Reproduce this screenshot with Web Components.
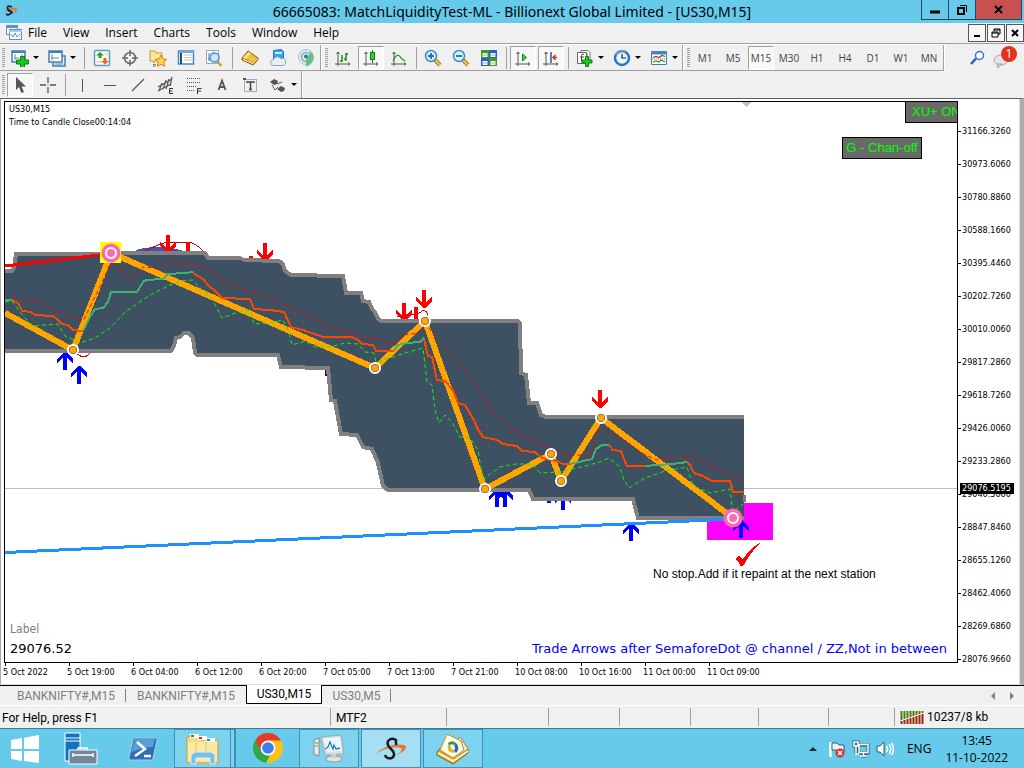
<!DOCTYPE html>
<html lang="en">
<head>
<meta charset="utf-8">
<title>66665083: MatchLiquidityTest-ML</title>
<style>
html, body { margin: 0; height: 100%; }
body { font-family: "Open Sans", "Noto Sans", sans-serif; color: #000; background: #f0f0f0; overflow: hidden; }
</style>
</head>
<body>
<trading-desktop></trading-desktop>
<script>
const ICONS = {
  brand: '<path d="M1 10Q7 4 14 5q4 3-4 6 4-3 2-4-5-1-11 3z" fill="#e8762c"/><path d="M10 4Q5 2 5.500 5T9 8.500 6 12l-2-1" fill="none" stroke="#223" stroke-width="1.800"/>',
  mdi: '<rect x="1.500" y="1.500" width="11" height="9" fill="#fff" stroke="#5b8fd6"/><path d="M1 3h12" stroke="#5b8fd6" stroke-width="2"/><rect x="4.500" y="5.500" width="12" height="10" fill="#fff" stroke="#5b8fd6"/><path d="M4 7h13" stroke="#a9c8ee" stroke-width="2"/><path d="M6 10l2 3 2-4 2 4 3-3" fill="none" stroke="#5b8fd6"/>',
  newchart: '<rect x="1" y="2" width="13" height="11" fill="#fff" stroke="#3f7fb5" stroke-width="1.500"/><path d="M1 3h13" stroke="#3f7fb5" stroke-width="2"/><path d="M4 5v6M3 9h5M11 5v4" stroke="#5a8db8" fill="none"/><path d="M9.500 7.500h4v3.500h4v4h-4v3.500h-4V15h-4v-4h4z" fill="#1ec41e" stroke="#0b7d12"/>',
  profiles: '<rect x="5" y="7" width="12" height="10" fill="#e3f0fb" stroke="#3f7fb5" stroke-width="1.500"/><rect x="1" y="2" width="13" height="11" fill="#fff" stroke="#3f7fb5" stroke-width="1.500"/><path d="M1 3h13" stroke="#3f7fb5" stroke-width="2"/><path d="M4 5v6M3 9h8M7 15h8" stroke="#5a8db8"/>',
  market: '<rect x="1.500" y="1.500" width="15" height="15" rx="1" fill="#fffdf0" stroke="#5a9bd0" stroke-width="1.500"/><path d="M4 13h4M12 5h3" stroke="#bbb"/><path d="M7 3l4 3.500H8.500V9h-3V6.500H3z" fill="#20a52c"/><path d="M12 15.500L8 12h2.500V9h3v3H16z" fill="#f0642b"/>',
  target: '<g fill="none" stroke="#666" stroke-width="1.500"><circle cx="9" cy="9" r="5.500"/><path d="M9 1v6M9 11v6M1 9h6M11 9h6"/></g>',
  navigator: '<path d="M1 2h5l1 2h6v8H1z" fill="#fbe79a" stroke="#c79a2a"/><path d="M5 13v5M4 16h5" stroke="#333" stroke-dasharray="1 1"/><path d="M12 6l1.800 3.800 4 .5-3 2.800.8 4.200L12 15.300 8.400 17.300l.8-4.200-3-2.800 4-.5z" fill="#ffd44d" stroke="#c8871a"/>',
  datawin: '<rect x="1.500" y="2" width="15" height="13" fill="#fff" stroke="#4a86c0" stroke-width="1.500"/><path d="M4 3v12" stroke="#1d4f86" stroke-width="2"/><path d="M2 3h15" stroke="#6fa8dc" stroke-width="2"/><path d="M7 6h8M7 8.500h8M7 11h8" stroke="#c2c2c2"/>',
  tester: '<path d="M1.500 1.500h12v13h-12z" fill="#fffdf5" stroke="#9aa8b4"/><path d="M4 4v8M3 10h4M8 3v4" stroke="#4a86c0"/><circle cx="9.500" cy="8.500" r="4.500" fill="#bfe0f7" fill-opacity=".8" stroke="#4a8fd0" stroke-width="1.500"/><path d="M12.500 12.500l4 4.500" stroke="#d69f23" stroke-width="2.500"/>',
  book: '<path d="M1 9L7 2l10 7v2l-5 5L1 11z" fill="#c98a1c" stroke="#8a5c0c"/><path d="M2 8.500L7.500 3 16 9l-4 4.500z" fill="#f3bd45"/><path d="M2 8.500L7.500 3 10 4.500 5 10z" fill="#fbe08a"/><path d="M2 10.500l10 4 5-5" fill="none" stroke="#fff0c0"/>',
  cloud: '<path d="M4.500 1.500l8-1 2 2v8h-10z" fill="#33a3ee" stroke="#1878c0"/><path d="M6 3h7v2H6z" fill="#c9ebff"/><path d="M4.500 16.500a3 3 0 0 1 0-6 4 4 0 0 1 7-1 3.500 3.500 0 0 1 3 7z" fill="#e8eef5" stroke="#8ba3bd"/>',
  signal: '<circle cx="9" cy="8" r="7.500" fill="#dfeaf0" stroke="#a9c3cf"/><circle cx="9" cy="8" r="4.500" fill="none" stroke="#7fb0c0" stroke-width="1.500"/><path d="M9 8v9.500c4-.5 7-4 7.500-8S14 2 12 1.500c2 3 1 5-3 6.500z" fill="#4fb562" opacity=".75"/><circle cx="9" cy="7.500" r="2" fill="#26838f"/>',
  bars: '<path d="M4 3v14M1 15h15M2.500 5L4 3l1.500 2M14 13.500l2 1.500-2 1.500" fill="none" stroke="#555"/><path d="M8 6v7M6 12h2M12 4v8M12 5h2M10 10h2" stroke="#1a8c1a" stroke-width="1.500"/>',
  candle: '<path d="M4 3v14M1 15h15M2.500 5L4 3l1.500 2M14 13.500l2 1.500-2 1.500" fill="none" stroke="#555"/><path d="M10.500 1v13" stroke="#0c6e0c"/><rect x="8.500" y="3.500" width="4" height="7" fill="#2fd02f" stroke="#0c7e0c"/>',
  line: '<path d="M4 3v14M1 15h15M2.500 5L4 3l1.500 2M14 13.500l2 1.500-2 1.500" fill="none" stroke="#555"/><path d="M3 12c3-7 6-7 8-3l4 3" fill="none" stroke="#219b21" stroke-width="1.300"/>',
  zoomin: '<path d="M11 11l5 5" stroke="#a87b1a" stroke-width="4"/><path d="M11 11l5 5" stroke="#f0c755" stroke-width="2"/><circle cx="7" cy="7" r="5.500" fill="#d9f0fc" stroke="#3c8cc8" stroke-width="1.500"/><path d="M4 7h6M7 4v6" stroke="#256f9e" stroke-width="1.800"/>',
  zoomout: '<path d="M11 11l5 5" stroke="#a87b1a" stroke-width="4"/><path d="M11 11l5 5" stroke="#f0c755" stroke-width="2"/><circle cx="7" cy="7" r="5.500" fill="#d9f0fc" stroke="#3c8cc8" stroke-width="1.500"/><path d="M4 7h6" stroke="#256f9e" stroke-width="1.800"/>',
  tile: '<path d="M1 1h8v8H1z" fill="#3c9a2c"/><path d="M9 1h8v8H9z" fill="#2e5fc4"/><path d="M1 9h8v8H1z" fill="#2e5fc4"/><path d="M9 9h8v8H9z" fill="#3c9a2c"/><path d="M2.500 4h5v4h-5zM10.500 4h5v4h-5zM2.500 12h5v4h-5zM10.500 12h5v4h-5z" fill="#f2faf0"/><path d="M3 6h4M11 6h4M3 14h4M11 14h4" stroke="#9bbf92"/>',
  autoscroll: '<path d="M4 3v14M1 15h15M2.500 5L4 3l1.500 2M14 13.500l2 1.500-2 1.500" fill="none" stroke="#555"/><path d="M8.500 5v7l4-3.500z" fill="#3fd23f" stroke="#148a14"/>',
  shift: '<path d="M4 3v14M1 15h15M2.500 5L4 3l1.500 2M14 13.500l2 1.500-2 1.500" fill="none" stroke="#555"/><path d="M9 3v11" stroke="#1f5f9e" stroke-width="1.500"/><path d="M15 8.500h-4M13.500 6L11 8.500l2.500 2.500" fill="none" stroke="#c23a10" stroke-width="1.500"/>',
  indicator: '<path d="M5 1.500h7l2 2v9h-3V4H5z" fill="#fff" stroke="#777"/><path d="M1.500 3.500h9v11h-9z" fill="#fff" stroke="#666"/><path d="M8 5.500c-2-1-2.500 0-2.500 2v5M4 8h4" fill="none" stroke="#444"/><path d="M9.500 7.500h3V11H16v3h-3.500v3.500h-3V14H6v-3h3.500z" fill="#1ed01e" stroke="#0b7d12"/>',
  clock: '<circle cx="9" cy="9" r="7" fill="#e7f4fd" stroke="#2777c6" stroke-width="2.500"/><path d="M9 5v4h4" stroke="#222" fill="none" stroke-width="1.200"/><path d="M2.500 6a7 7 0 0 1 10-3.500" stroke="#8cc6f5" fill="none"/>',
  template: '<path d="M1.500 2.500h15v13h-15z" fill="#fff" stroke="#3f7fc0"/><path d="M1 4h16" stroke="#3f86d2" stroke-width="3"/><path d="M3 8.500l3-1 3 1 3-2 3 1" fill="none" stroke="#b3331d" stroke-width="1.300"/><path d="M3 13l3-1 3 1 2-2 4 2" fill="none" stroke="#2a9a2a" stroke-width="1.300"/><path d="M2 10h14" stroke="#777" stroke-dasharray="1 1"/>',
  pointer: '<path d="M5 1v13l3-3 2.500 6 2.500-1-2.500-5.500H15z" fill="#555"/>',
  cross: '<path d="M9 1v6M9 11v6M1 9h6M11 9h6" stroke="#555" stroke-width="1.300"/><path d="M8.500 8.500h1v1h-1z" fill="#555"/>',
  vline: '<path d="M9.500 3v13" stroke="#555"/>',
  hline: '<path d="M3 9.500h12" stroke="#555"/>',
  trend: '<path d="M3 15L15 3" stroke="#555" stroke-width="1.300"/>',
  channel: '<path d="M1 11L15 3M1 15L14 8M5 7l-3 8M9 4L6 13M12 3l-3 10M15 1l-2 9" stroke="#555" fill="none" stroke-width="1.200"/><path d="M16 12.500h-3.500v5H16M12 15h3.500" stroke="#333" fill="none"/>',
  fibo: '<path d="M2 2.500h14M2 6.500h14M2 10.500h10M2 14.500h8" stroke="#555" stroke-dasharray="1 1"/><path d="M16.500 12.500h-4V18M12.500 15h3.500" stroke="#333" fill="none"/>',
  text: '<path d="M5.500 14L9 4.500 12.500 14M6.500 11h5" stroke="#555" fill="none" stroke-width="1.800"/>',
  label: '<path d="M3.500 3.500h12v12h-12z" fill="none" stroke="#666" stroke-dasharray="1 1"/><path d="M2 2h3v2H2z" fill="#555"/><path d="M6 7V6h7v1M9.500 6v8M8 13.500h3" stroke="#444" stroke-width="1.500" fill="none"/>',
  shapes: '<path d="M5 3l4 2-1 3-3 1-4-3z" fill="#555"/><path d="M3 9l3 5 3-3M8 8l5-2" fill="none" stroke="#555"/><path d="M12 10l4 2-1 3-3 1-4-3z" fill="#555"/>',
  search: '<circle cx="11.500" cy="6.500" r="4" fill="#fff" stroke="#3b6fd0" stroke-width="1.500"/><path d="M8 9.500L3 15" stroke="#2c5cc0" stroke-width="2.500"/>',
  chat: '<ellipse cx="9" cy="9" rx="7" ry="5" fill="#e4e4e4" stroke="#a6a6a6"/><path d="M5 13l1 4 4-4z" fill="#d4d4d4" stroke="#a6a6a6"/>',
  windows: '<path d="M0 5l11-2v11H0zM13 2.700L28 0v14H13zM0 16h11v10L0 24zM13 16h15v12l-15-2z" fill="#fff"/>',
  server: '<path d="M1 1h15v28H1z" fill="#0f74bc" stroke="#fff"/><path d="M1 6h15M1 9h15" stroke="#fff"/><path d="M5 18h28v14H5z" fill="#74879a" stroke="#fff"/><path d="M14 18v-2h9v2" fill="none" stroke="#fff" stroke-width="1.500"/><path d="M9 23h20M9 21v4M29 21v4" stroke="#fff" stroke-width="1.500"/>',
  powershell: '<path d="M8 3h20c2 0 2 1 2 2l-4 18c0 2-1 2-3 2H4c-2 0-2-1-2-3L6 5c0-1 1-2 2-2z" fill="#2b70b4" stroke="#a9cdea"/><path d="M8 4h20l-2 8C18 12 10 14 4 18z" fill="#5b9ed5"/><path d="M10 7l8 7-10 7M17 21h7" stroke="#fff" stroke-width="2.500" fill="none"/>',
  folder: '<path d="M1 4h12l2 3h17v23H1z" fill="#f5dc83" stroke="#c7a548"/><path d="M4 1h9v4H4z" fill="#fff"/><path d="M5 2h3v2H5z" fill="#1b9b20"/><path d="M12 3h9v4h-9z" fill="#fff"/><path d="M13 4h3v2h-3z" fill="#d5301c"/><path d="M20 5h9v4h-9z" fill="#fff"/><path d="M21 6h3v2h-3z" fill="#2f7fd8"/><path d="M2 9h29v19H2z" fill="#fae9a6"/><path d="M10 9v15M20 9v15" stroke="#e1c468"/><path d="M5 31v-9l4-3h16l4 3v9h-5v-6H10v6z" fill="#78c0e8" stroke="#d7f0fc"/>',
  chrome: '<circle cx="15" cy="15" r="15" fill="#fbc116"/><path d="M2 7.500A15 15 0 0 1 28 7.500H15L8.500 19z" fill="#e33b2e"/><path d="M2 7.500L8.600 18.800A7.500 7.500 0 0 0 17 22l-4 8A15 15 0 0 1 2 7.500z" fill="#2da94f"/><circle cx="15" cy="15" r="7.500" fill="#fff"/><circle cx="15" cy="15" r="5.800" fill="#3b7ded"/>',
  monitor: '<path d="M1 6l5-2v18l-5-2z" fill="#eee" stroke="#888"/><path d="M2 9h3M2 12h3" stroke="#3a3"/><path d="M8 3l20-2 3 19-19 1z" fill="#ddd" stroke="#9aa"/><path d="M10 5l17-2 2 14-15 1z" fill="#e9f6ff"/><path d="M12 15l3-2 2-5 3 7 1-4 2 4 4-1" fill="none" stroke="#2c79c9" stroke-width="1.300"/><ellipse cx="21" cy="25" rx="8" ry="3" fill="#e2e2e2" stroke="#999"/><path d="M18 20h5v4h-5z" fill="#ccc"/>',
  journal: '<path d="M1 19L11 8l21 8v4L17 31 1 22z" fill="#d9a22d" stroke="#8b5f10"/><path d="M2 20l15 8 15-10" fill="none" stroke="#fff2b8" stroke-width="2"/><path d="M10 18L24 4l8 12-13 9z" fill="#f4eaba" stroke="#b28b32"/><path d="M4 17L11 1l14 7 3 9-11 8z" fill="#fffbe0" stroke="#b28b32"/><path d="M12 10q5-4 9 1l-3 1q-3-2-5 1z" fill="#2c9b50"/><path d="M21 11q3 5-1 9l-2-2q2-3 0-6z" fill="#2864b8"/><path d="M12 12q-2 7 6 8v-3q-4-1-3-4z" fill="#d6b92c"/>',
  brandmark: '<path d="M1 17C7 10 20 6 29 8c5 2 0 7-8 10 5-3 7-6 5-7C20 9 8 12 1 17z" fill="#e8762c"/><path d="M21 8V3C17 0 11 3 13 8s7 5 6 10-8 4-9 0" fill="none" stroke="#1c1c1c" stroke-width="2.500"/>',
  flag: '<path d="M2.500 2v15" stroke="#fff" stroke-width="2.500"/><path d="M4 3h5l2 2h5v7h-5L9 10H4z" fill="#e9f5fb" stroke="#456"/><circle cx="12" cy="13" r="4.500" fill="#d8322a"/><path d="M10 11l4 4M14 11l-4 4" stroke="#fff" stroke-width="1.500"/>',
  network: '<g fill="none" stroke="#2a5a6e" stroke-width="3"><path d="M6 5h10v8H7zM9 16h6M11 13v3M2 2h4v4H2zM4 6v8"/></g><g fill="none" stroke="#fff" stroke-width="1.500"><path d="M7 4.500h9v8H7zM8 16h7M11.500 13v3M2 2h4v4H2zM4 6v8h3"/></g>',
  sound: '<path d="M1 6h3l4-4v14l-4-4H1z" fill="#fff" stroke="#2a5a6e"/><path d="M10.500 6q2 3 0 6M13 4q3.500 5 0 10M15.500 3q4 6 0 12" fill="none" stroke="#fff" stroke-width="1.500"/>',
  traffic: '<path d="M1.500 0v9M4.500 0v8M7.500 0v7M10.500 0v6M13.500 0v5M16.500 0v4M19.500 0v3M22.500 0v2" stroke="#4f7d12" stroke-width="2"/><path d="M1.500 10v3M4.500 9v4M7.500 8v5M10.500 7v6M13.500 6v7M16.500 5v8M19.500 4v9M22.500 3v10" stroke="#9b2410" stroke-width="2"/>'
};

function element(tag, render) {
  customElements.define(tag, class extends HTMLElement {
    constructor() { super(); this.attachShadow({ mode: 'open' }); }
    connectedCallback() { this.shadowRoot.innerHTML = render(this); }
  });
}

element('ui-icon', el => {
  const w = el.getAttribute('w') || 18, h = el.getAttribute('h') || w;
  return `<style>:host{display:block;flex:none;width:${w}px;height:${h}px}svg{display:block}</style>
  <svg width="${w}" height="${h}" viewBox="0 0 ${w} ${h}" aria-hidden="true">${ICONS[el.getAttribute('name')]}</svg>`;
});

element('tool-button', el => `<style>
:host{display:block;flex:none}
button{display:flex;align-items:center;width:28px;height:24px;padding:0 5px;border:0;background:none;font:10px "Open Sans","Noto Sans",sans-serif;color:#444}
.drop{width:37px}
.drop::after{content:"";margin-left:4px;border:3px solid transparent;border-top-color:#000;border-bottom:0}
.text{justify-content:center;padding:0}
.pressed{width:26px;margin:0 1px;padding:0 3px;border:1px solid;border-color:#a0a0a0 #fff #fff #a0a0a0;background:#f8f8f8}
.pressed.text{padding:0}
</style><button type="button" aria-label="${el.getAttribute('label') || el.textContent}"
 class="${el.hasAttribute('drop') ? 'drop ' : ''}${el.hasAttribute('pressed') ? 'pressed ' : ''}${el.hasAttribute('icon') ? '' : 'text'}">${
  el.hasAttribute('icon') ? `<ui-icon name="${el.getAttribute('icon')}"></ui-icon>` : '<slot></slot>'}</button>`);

element('tool-group', () => `<style>
:host{display:flex;align-items:center;flex:none;box-sizing:border-box;height:100%;border-right:1px solid #a0a0a0;box-shadow:1px 0 #fff}
.grip{width:3px;height:20px;margin:0 1px 0 2px;background:repeating-linear-gradient(#a0a0a0 0 1px,#f0f0f0 1px 2px)}
</style><span class="grip"></span><slot></slot>`);

element('tool-sep', el => `<style>
:host{display:block;flex:none;width:${el.hasAttribute('wide') ? 8 : 6}px;height:22px}
i{display:block;width:1px;height:22px;margin:0 auto;background:#a0a0a0}
</style><i></i>`);

element('title-bar', () => `<style>
:host{display:grid;grid-template-columns:1fr auto 1fr;height:23px;background:#66caeb}
ui-icon{margin:3px 2px}
h1{margin:0;font:14px/23px "Noto Sans",sans-serif;white-space:nowrap}
.controls{display:flex;justify-content:flex-end;margin-right:2px}
button{width:27px;height:20px;padding:0;border:1px solid #24485a;border-top:0;border-right:0;background:#66caeb}
.close{width:47px;background:#c75050;border-right:1px solid #24485a}
svg{display:block;margin:0 auto}
</style>
<ui-icon name="brand"></ui-icon>
<h1>66665083: MatchLiquidityTest-ML - Billionext Global Limited - [US30,M15]</h1>
<div class="controls">
<button aria-label="Minimize"><svg width="12" height="12"><path d="M1 8h10" stroke="#000" stroke-width="3"/></svg></button>
<button aria-label="Restore"><svg width="12" height="12"><path d="M2 4h6v6H2z" fill="none" stroke="#000" stroke-width="2"/><path d="M4 1.500h6.500V8" fill="none" stroke="#000"/></svg></button>
<button class="close" aria-label="Close"><svg width="12" height="12"><path d="M2 2l7 7M9 2L2 9" stroke="#000" stroke-width="2"/></svg></button>
</div>`);

element('menu-bar', () => `<style>
:host{display:flex;align-items:center;height:20px;border-bottom:1px solid #a0a0a0;background:#f0f0f0}
ui-icon{margin:0 5px}
nav{display:flex;flex:1;gap:16px}
nav button{padding:0;border:0;background:none;font:12px/18px "Open Sans","Noto Sans",sans-serif}
.mdi{display:flex;gap:1px}
.mdi button{width:18px;height:18px;padding:0;border:1px solid #555;background:#f6f6f6}
svg{display:block;margin:0 auto}
</style>
<ui-icon name="mdi"></ui-icon>
<nav>${['File', 'View', 'Insert', 'Charts', 'Tools', 'Window', 'Help'].map(t => `<button>${t}</button>`).join('')}</nav>
<div class="mdi">
<button aria-label="Minimize chart"><svg width="12" height="12"><path d="M3 9h6" stroke="#000" stroke-width="2"/></svg></button>
<button aria-label="Restore chart"><svg width="12" height="12"><path d="M4 4V2h6v5H8M2 5h6v5H2zM2 6h6M4 3h6" fill="none" stroke="#000"/></svg></button>
<button aria-label="Close chart"><svg width="12" height="12"><path d="M3 3l6 6M9 3L3 9" stroke="#000" stroke-width="2"/></svg></button>
</div>`);

const tools = (list) => list.map(t => {
  if (t === '|') return '<tool-sep></tool-sep>';
  if (t === '||') return '<tool-sep wide></tool-sep>';
  const [icon, label, flags = ''] = t;
  return `<tool-button icon="${icon}" label="${label}" ${flags}></tool-button>`;
}).join('');

element('tool-bars', () => `<style>
:host{display:block;background:#f0f0f0}
.row{display:flex;height:27px;align-items:center;box-sizing:border-box}
.groups{display:flex;gap:2px;height:27px;box-sizing:border-box;border-bottom:1px solid #a0a0a0;border-top:1px solid #fff}
.right{display:flex;flex:1;justify-content:flex-end;gap:6px;padding-right:14px;align-items:center}
.right button{display:block;padding:0;border:0;background:none}
.right .chat{position:relative;margin-top:4px}
.badge{position:absolute;left:9px;top:-5px;width:16px;height:16px;border-radius:8px;background:#e0321e;color:#fff;font:12px/16px "Open Sans",sans-serif;text-align:center}
</style>
<div class="row"><div class="groups">
<tool-group>${tools([['newchart', 'New chart', 'drop'], ['profiles', 'Profiles', 'drop'], '||', ['market', 'Market Watch'], ['target', 'Data Window'], ['navigator', 'Navigator'], ['datawin', 'Terminal'], ['tester', 'Strategy Tester'], '||', ['book', 'New order'], ['cloud', 'Cloud'], ['signal', 'Signals']])}</tool-group>
<tool-group>${tools([['bars', 'Bar chart'], ['candle', 'Candlesticks', 'pressed'], ['line', 'Line chart'], '|', ['zoomin', 'Zoom in'], ['zoomout', 'Zoom out'], ['tile', 'Tile windows'], '|', ['autoscroll', 'Auto scroll', 'pressed'], ['shift', 'Chart shift', 'pressed'], '|', ['indicator', 'Indicators', 'drop'], ['clock', 'Periods', 'drop'], ['template', 'Templates', 'drop']])}</tool-group>
<tool-group>${['M1', 'M5', 'M15', 'M30', 'H1', 'H4', 'D1', 'W1', 'MN'].map(t => `<tool-button ${t === 'M15' ? 'pressed' : ''}>${t}</tool-button>`).join('')}</tool-group>
</div>
<div class="right"><button aria-label="Search"><ui-icon name="search"></ui-icon></button>
<button class="chat" aria-label="Messages"><ui-icon name="chat"></ui-icon><span class="badge">1</span></button></div></div>
<div class="row"><tool-group>${tools([['pointer', 'Cursor', 'pressed'], ['cross', 'Crosshair'], '|', ['vline', 'Vertical line'], ['hline', 'Horizontal line'], ['trend', 'Trendline'], ['channel', 'Equidistant channel'], ['fibo', 'Fibonacci retracement'], ['text', 'Text'], ['label', 'Text label'], ['shapes', 'Arrows', 'drop']])}</tool-group></div>`);

const UPPER = '5,271 12,271 14,268 16,254 205,253 208,258 240,258 244,260 279,261 283,264 285,271 291,275 343,276 346,293 361,293 363,301 369,302 372,309 375,312 378,319 381,321 518,321 520,323 521,373 526,375 529,403 537,403 541,415 546,417 744,417';
const LOWER = '5,351 171,351 174,346 176,338 180,337 184,333 189,333 193,338 195,353 197,355 278,355 281,367 328,368 331,400 335,401 341,434 357,435 363,447 372,449 378,463 383,486 388,490 529,490 533,499 633,499 638,518 744,518';
const ZIGZAG = [[5, 313], [73, 350], [111, 253], [375, 368], [425, 321], [485, 489], [551, 454], [561, 481], [601, 418], [733, 518]];
const down = (x, y) => `<path d="M-2-18h4v12l6-5v4L1 0h-2L-8-7v-4l6 5z" fill="#f00" transform="translate(${x} ${y})"/>`;
const up = (x, y) => `<path d="M-2 18h4V6l6 5V7L1 0h-2L-8 7v4l6-5z" fill="#00f" transform="translate(${x} ${y})"/>`;
const dot = ([x, y]) => `<circle cx="${x}" cy="${y}" r="5" fill="#3d5163" stroke="#fff" stroke-width="2"/><circle cx="${x}" cy="${y}" r="3.500" fill="#ffa500"/>`;
const rose = (x, y) => `<circle cx="${x}" cy="${y}" r="9.500" fill="#ff69b4"/><circle cx="${x}" cy="${y}" r="5" fill="none" stroke="#fff" stroke-width="2"/>`;
const trend = (c, pts) => `<polyline points="${pts}" fill="none" stroke="${c}" stroke-width="2"/>`;
const R = '#ff4500', G = '#3cb371';

element('chart-drawing', () => `<style>:host{display:block;height:100%}svg{display:block;width:100%;height:100%}</style>
<svg viewBox="5 102 952 560" preserveAspectRatio="xMinYMin slice" shape-rendering="crispEdges" role="img" aria-label="US30 15 minute price chart">
<path d="M5 488.500H957" stroke="#c0c0c0"/>
<path d="M707 503h66v37h-66z" fill="#f0f"/>
<path d="M742 102h9l-4.500 5z" fill="#c0c0c0"/>
<path d="M134 252l5-3 13-2h16l12 3 12 3z" fill="#4353b0"/>
<path d="M145 251q12-6 22-9h20q8 0 17 10M75 352q9 9 15 1M397 317l13-3q8 1 12-3 6-2 6 8" fill="none" stroke="#d00000"/>
${down(168, 253)}${down(265, 261)}${down(404, 321)}${down(424, 308)}${down(600, 408)}
<path d="M186 242h4v11h-4zM249 256h4v3h-4zM414 307h4v13h-4z" fill="#f00"/>
${up(65, 352)}${up(79, 366)}${up(497, 489)}${up(505, 489)}${up(563, 492)}${up(631, 523)}
<path d="M325 369h3v7h-3zM547 500h4v3h-4z" fill="#00f"/>
<polygon points="${UPPER} ${LOWER.split(' ').reverse().join(' ')}" fill="#3d5163"/>
<g fill="none" stroke="#808080" stroke-width="4"><polyline points="${UPPER}"/><polyline points="${LOWER}"/></g>
<path d="M743 495h3v7h-3z" fill="#808080"/>
<path d="M5 552.500L733 519" stroke="#1e90ff" stroke-width="3"/>
<path d="M5 266L103 254.500" stroke="#f00" stroke-width="3"/>
<polyline points="${ZIGZAG.join(' ')}" fill="none" stroke="#ffa500" stroke-width="6"/>
${trend(G, '5,300 12,300')}
${trend(R, '12,300 18,303 22,311 31,312 35,315 53,316 58,320 62,324 68,325 73,330 83,331')}
${trend(G, '83,331 90,317 95,309 103,308 108,302 111,292 137,292 143,282 146,280 163,279 168,274 185,273 193,272')}
${trend(R, '193,273 203,279 209,286 215,291 222,298 250,299 254,309 270,310 284,312 291,327 303,330 323,337 352,337 358,340 362,344 373,345 376,351 394,351')}
${trend(G, '394,351 398,345 407,343 420,342 424,338')}
${trend(R, '424,339 428,356 432,357 437,380 445,381 453,390 458,403 465,405 475,422 477,428 483,437 497,440 503,444 517,446 522,451 535,452 542,458 557,461 563,464 570,464')}
${trend(G, '570,464 592,459 596,449 602,445 609,445')}
${trend(R, '609,445 613,450 621,451 624,459 627,466 646,466')}
${trend(G, '646,466 657,465 673,464 687,462')}
${trend(R, '687,462 690,465 694,473 703,476 712,481 730,481 733,492 744,492')}
<g fill="none" stroke-dasharray="4 3" shape-rendering="auto">
<polyline points="12,298 20,298 40,303 60,313 83,321 100,287 111,262 125,274 134,279 143,267 158,268 167,262 190,263 205,267 235,286 270,298 290,308 307,315 330,327 350,333 370,338 395,344 402,335 420,333 425,322 440,343 450,353 475,383 490,408 510,428 530,440 551,448 563,454 590,456 594,446 597,430 603,430 625,441 645,455 657,460 690,457 700,461 723,472 744,481" stroke="#f00"/>
<polyline points="5,302 12,301 20,312 32,326 45,325 58,324 65,336 80,343 95,338 110,328 125,312 150,295 170,285 180,281 193,280 198,286 210,297 217,308 222,318 235,313 250,310 254,324 270,323 283,320 289,332 292,345 305,341 315,347 330,347 345,343 358,344 365,352 374,353 376,362 390,358 405,353 423,348 427,382 432,385 435,410 439,423 445,415 452,422 460,437 470,438 478,450 483,480 490,474 500,467 515,464 533,464 540,473 560,472 585,466 600,462 609,458 620,467 624,480 629,488 645,478 665,471 687,467 693,486 710,493 730,489 733,512 743,504" stroke="#0f0"/>
</g>
<g shape-rendering="auto">
<path d="M100 242h21v21h-21z" fill="#ff0"/>
${ZIGZAG.slice(1, 9).filter(p => p[0] !== 111).map(dot).join('')}
${rose(111, 253)}${up(741, 520)}${rose(733, 518)}
</g>
<path d="M735 559l4-3 4 3q7-11 17-16-9 9-17 23h-3q-1-5-5-7z" fill="#f00"/>
</svg>`);

element('price-axis', () => `<style>
:host{position:relative;display:block;padding-top:14px;font:9px/33px "DejaVu Sans Condensed","Noto Sans",sans-serif}
ol{margin:0;padding:0;list-style:none}
li{height:33px;display:flex;align-items:center;gap:1px}
li::before{content:"";width:3px;height:1px;background:#000}
output{position:absolute;left:2px;top:382px;width:54px;height:11px;padding-left:2px;box-sizing:border-box;line-height:11px;background:#000;color:#fff}
</style><ol>${'31166.3260 30973.6060 30780.8860 30588.1660 30395.4460 30202.7260 30010.0060 29817.2860 29618.7260 29426.0060 29233.2860 29040.5660 28847.8460 28655.1260 28462.4060 28269.6860 28076.9660'.split(' ').map(p => `<li>${p}</li>`).join('')}</ol><output>29076.5195</output>`);

element('time-axis', () => `<style>
:host{display:block;font:9px/12px "DejaVu Sans Condensed","Noto Sans",sans-serif}
ol{display:flex;margin:0;padding:0 0 0 2px;list-style:none}
li{width:64px;white-space:nowrap}
li::before{content:"";display:block;width:1px;height:3px;background:#000}
span{display:block;margin-left:-2px}
</style><ol>${['5 Oct 2022', '5 Oct 19:00', '6 Oct 04:00', '6 Oct 12:00', '6 Oct 20:00', '7 Oct 05:00', '7 Oct 13:00', '7 Oct 21:00', '10 Oct 08:00', '10 Oct 16:00', '11 Oct 00:00', '11 Oct 09:00'].map(t => `<li><span>${t}</span></li>`).join('')}</ol>`);

element('chart-window', () => `<style>
:host{display:grid;grid-template-columns:minmax(0,1fr) 62px;grid-template-rows:minmax(0,1fr) 21px;flex:1;min-height:0;box-sizing:border-box;padding:2px 0 0 3px;border-top:1px solid #606060;border-right:4px solid #acacac;border-bottom:1px solid #ddd;background:#fff;box-shadow:inset 1px 0 #aaa,inset -1px 0 #ddd}
.plot{position:relative;overflow:hidden;margin-left:1px;border:1px solid #000}
.info{position:absolute;left:4px;top:1px;font:9px/13px "DejaVu Sans Condensed","Noto Sans",sans-serif}
.info p,.quote p{margin:0}
.quote{position:absolute;left:5px;bottom:4px;font:13px/19px "DejaVu Sans",sans-serif}
.quote .name{font:12px/19px "DejaVu Sans Condensed",sans-serif;color:#808080}
.note{position:absolute;left:648px;top:464px;margin:0;font:12px/16px "Liberation Sans",sans-serif;white-space:nowrap}
.hint{position:absolute;right:10px;bottom:4px;margin:0;font:13px/19px "DejaVu Sans",sans-serif;color:#00f;white-space:nowrap}
.flag{position:absolute;box-sizing:border-box;width:80px;height:22px;padding:0;border:1px solid #000;background:#696969;color:#0f0;font:13px/20px "Liberation Sans",sans-serif;white-space:nowrap}
.xu{right:-28px;top:-1px;padding-left:6px;text-align:left}
.chan{right:35px;top:35px}
time-axis{grid-column:1/3}
</style>
<div class="plot"><chart-drawing></chart-drawing>
<div class="info"><p>US30,M15</p><p>Time to Candle Close00:14:04</p></div>
<button class="flag xu">XU+ ON</button><button class="flag chan">G - Chan-off</button>
<p class="note">No stop.Add if it repaint at the next station</p>
<div class="quote"><p class="name">Label</p><p>29076.52</p></div>
<p class="hint">Trade Arrows after SemaforeDot @ channel / ZZ,Not in between</p></div>
<price-axis></price-axis><time-axis></time-axis>`);

element('chart-tabs', () => `<style>
:host{display:flex;height:20px;box-sizing:border-box;border-top:1px solid #000;background:#f0f0f0}
button{position:relative;height:19px;box-sizing:border-box;padding:0;border:0;background:none;color:#808080;font:12px/18px Roboto,sans-serif}
.wide{width:120px}
.first{margin-left:6px}
.first::after,.last::after{content:"";position:absolute;right:0;top:3px;width:1px;height:13px;background:#808080}
.active{width:76px;margin-top:-1px;border:1px solid #000;border-top:0;background:#fff;color:#000}
.last{width:69px}
.nav{display:flex;gap:13px;margin-left:auto;padding-right:8px;align-items:center}
.nav button{width:6px;height:8px}
svg{display:block}
</style>
<button class="wide first">BANKNIFTY#,M15</button><button class="wide">BANKNIFTY#,M15</button><button class="active">US30,M15</button><button class="last">US30,M5</button>
<div class="nav"><button aria-label="Previous tab"><svg width="4" height="8"><path d="M4 0v8L0 4z" fill="#808080"/></svg></button><button aria-label="Next tab"><svg width="4" height="8"><path d="M0 0v8l4-4z" fill="#808080"/></svg></button></div>`);

element('status-bar', () => `<style>
:host{display:flex;align-items:center;height:23px;background:#f0f0f0;border-top:1px solid #fff;box-sizing:border-box;font:12px/20px Roboto,sans-serif;white-space:nowrap}
span{box-sizing:border-box;height:18px;padding-left:5px;border-left:1px solid #a0a0a0}
.help{flex:1;padding-left:2px;border:0}
.traffic{display:flex;align-items:center;gap:3px;width:130px}
</style><span class="help">For Help, press F1</span><span style="width:116px">MTF2</span><span style="width:102px"></span><span style="width:71px"></span><span style="width:71px"></span><span style="width:68px"></span><span style="width:70px"></span><span style="width:66px"></span><span class="traffic"><ui-icon name="traffic" w="24" h="13"></ui-icon>10237/8 kb</span>`);

element('task-bar', () => `<style>
:host{display:flex;height:40px;box-sizing:border-box;border-top:1px solid #3c7d96;background:#66caeb}
button{display:flex;align-items:center;justify-content:center;box-sizing:border-box;width:60px;height:39px;padding:0;margin-right:2px;border:0;background:none}
.start{width:50px;margin:0}
.pin{width:62px;margin:0}
.open{border:1px solid #3f92b0;background:#7cd2ef}
.stack{width:56px;margin:0;border-right:0}
.edge{box-sizing:border-box;width:5px;border:1px solid #3f92b0;background:#7cd2ef}
.chrome{width:64px;margin:0;border:1px solid #3f92b0;border-top:0;border-width:0 0 1px 1px}
.active{background:#a6def3}
.tray{display:flex;align-items:center;margin-left:auto;gap:6px;font-size:12px;line-height:17px}
.tray svg{margin-right:5px}
.lang{margin:0 8px 0 7px}
.clock{text-align:center;margin-right:16px}
</style>
<button class="start" aria-label="Start"><ui-icon name="windows" w="28"></ui-icon></button>
<button class="pin" aria-label="Server Manager"><ui-icon name="server" w="34" h="33"></ui-icon></button>
<button class="pin" aria-label="PowerShell"><ui-icon name="powershell" w="32" h="28"></ui-icon></button>
<button class="open stack" aria-label="File Explorer"><ui-icon name="folder" w="33" h="32"></ui-icon></button><span class="edge"></span>
<button class="chrome" aria-label="Chrome"><ui-icon name="chrome" w="30"></ui-icon></button>
<button class="open" aria-label="Monitor"><ui-icon name="monitor" w="32" h="29"></ui-icon></button>
<button class="open active" aria-label="Trading terminal"><ui-icon name="brandmark" w="32" h="24"></ui-icon></button>
<button class="open" aria-label="Journal"><ui-icon name="journal" w="34" h="32"></ui-icon></button>
<div class="tray"><svg width="8" height="4"><path d="M0 4l4-4 4 4z" fill="#123"/></svg><ui-icon name="flag"></ui-icon><ui-icon name="network"></ui-icon><ui-icon name="sound"></ui-icon><span class="lang">ENG</span><time class="clock">13:45<br>11-10-2022</time></div>`);

element('trading-desktop', () => `<style>:host{display:flex;flex-direction:column;height:100vh}</style>
<title-bar></title-bar><menu-bar></menu-bar><tool-bars></tool-bars><chart-window></chart-window><chart-tabs></chart-tabs><status-bar></status-bar><task-bar></task-bar>`);
</script>
</body>
</html>
